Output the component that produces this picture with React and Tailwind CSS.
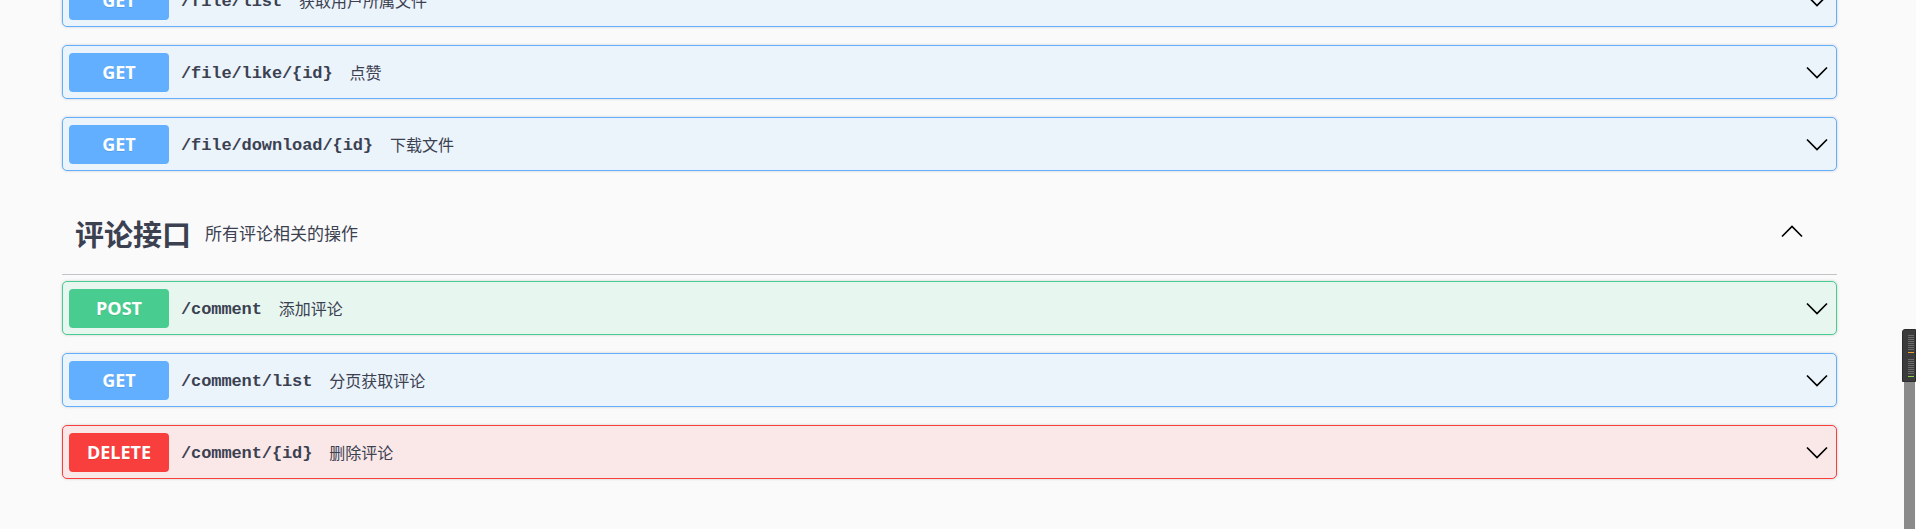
import React from "react";

const METHODS = {
  GET: { border: "border-[#61affe]", bg: "bg-[#ebf3fb]", badge: "bg-[#61affe]" },
  POST: { border: "border-[#49cc90]", bg: "bg-[#e8f6f0]", badge: "bg-[#49cc90]" },
  DELETE: { border: "border-[#f93e3e]", bg: "bg-[#fae7e7]", badge: "bg-[#f93e3e]" },
};

function ChevronDown() {
  return (
    <svg width="22" height="13" viewBox="0 0 22 13" className="mr-[8px] shrink-0">
      <polyline points="1,1.5 11,11.5 21,1.5" fill="none" stroke="#000" strokeWidth="1.7" />
    </svg>
  );
}

function ChevronUp() {
  return (
    <svg width="22" height="13" viewBox="0 0 22 13" className="mr-[34px] shrink-0">
      <polyline points="1,11.5 11,1.5 21,11.5" fill="none" stroke="#000" strokeWidth="1.7" />
    </svg>
  );
}

function Op({ method, path, desc }) {
  const m = METHODS[method];
  return (
    <div
      className={`flex items-center h-[54px] mb-[18px] border ${m.border} ${m.bg} rounded-[5px] shadow-[0_0_3px_rgba(0,0,0,0.19)] pl-[6px]`}
    >
      <div
        className={`w-[100px] h-[39px] ${m.badge} rounded-[4px] flex items-center justify-center text-white text-[18px] font-bold [text-shadow:0_1px_0_rgba(0,0,0,0.1)] shrink-0`}
        style={{ fontFamily: '"Open Sans", "Noto Sans", sans-serif' }}
      >
        {method}
      </div>
      <span
        className="ml-[12px] mt-[3px] text-[17px] font-bold text-[#3b4151] tracking-[-0.1px]"
        style={{ fontFamily: '"Liberation Mono", "DejaVu Sans Mono", monospace' }}
      >
        {path}
      </span>
      <span
        className="ml-[17px] text-[16px] text-[#3b4151]"
        style={{ fontFamily: '"Noto Sans CJK SC", "Noto Sans", sans-serif' }}
      >
        {desc}
      </span>
      <div className="flex-1" />
      <ChevronDown />
    </div>
  );
}

function Scroller() {
  const grays1 = [0, 1, 2, 3, 4, 5, 6, 7];
  const grays2 = [0, 1, 2, 3, 4, 5, 6, 7];
  return (
    <div className="absolute left-[1902px] top-[329px] w-[14px] h-[200px] flex flex-col">
      <div className="h-[53px] bg-[#3c3c3c] rounded-tl-[3px] border border-[#2c2c2c] flex flex-col items-end pr-[1px] pt-[5px]">
        {grays1.map((i) => (
          <div key={"a" + i} className="w-[6px] h-[1px] bg-[#6c6c6c] mb-[1px]" />
        ))}
        <div className="w-[6px] h-[1px] bg-[#f0a030] mt-[1px] mb-[6px]" />
        {grays2.map((i) => (
          <div key={"b" + i} className="w-[6px] h-[1px] bg-[#6c6c6c] mb-[1px]" />
        ))}
        <div className="w-[6px] h-[1px] bg-[#8ed24a] mt-[1px]" />
      </div>
      <div className="ml-[2px] w-[11px] flex-1 bg-[#8a8a8a]" />
    </div>
  );
}

export default function App() {
  return (
    <div className="relative w-[1916px] h-[529px] overflow-hidden bg-[#fafafa]">
      <div className="ml-[62px] w-[1775px] mt-[-27px]">
        <Op method="GET" path="/file/list" desc="获取用户所属文件" />
        <Op method="GET" path="/file/like/{id}" desc="点赞" />
        <Op method="GET" path="/file/download/{id}" desc="下载文件" />

        <div className="flex items-center h-[86px] border-b border-[#c1c3c7] mb-[6px]">
          <div className="flex items-center pl-[13px] mt-[5px]">
            <span
              className="text-[29px] font-bold text-[#3b4151]"
              style={{ fontFamily: '"Noto Sans CJK SC", "Noto Sans", sans-serif' }}
            >
              评论接口
            </span>
            <span
              className="ml-[14px] mb-[3px] text-[17px] text-[#3b4151]"
              style={{ fontFamily: '"Noto Sans CJK SC", "Noto Sans", sans-serif' }}
            >
              所有评论相关的操作
            </span>
          </div>
          <div className="flex-1" />
          <ChevronUp />
        </div>

        <Op method="POST" path="/comment" desc="添加评论" />
        <Op method="GET" path="/comment/list" desc="分页获取评论" />
        <Op method="DELETE" path="/comment/{id}" desc="删除评论" />
      </div>
      <Scroller />
    </div>
  );
}
